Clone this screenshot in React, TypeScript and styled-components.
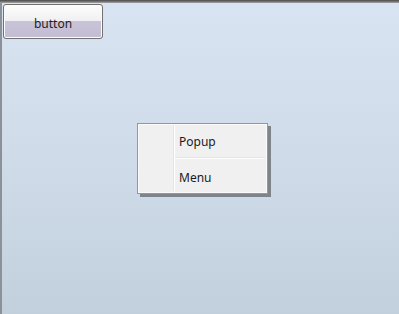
import styled, { createGlobalStyle } from "styled-components";

const GlobalStyle = createGlobalStyle`
  html, body {
    margin: 0;
    padding: 0;
  }
  body {
    font-family: "Noto Sans", "Open Sans", "DejaVu Sans", sans-serif;
  }
`;

const Window = styled.div`
  position: relative;
  width: 399px;
  height: 314px;
  box-sizing: border-box;
  border-top: 3px solid #6a6a6a;
  border-left: 2px solid #8c9198;
  background: linear-gradient(to bottom, #d8e4f1 0%, #cfdbe8 50%, #c2d0dd 100%);
  padding: 1px 0 0 1px;
`;

const TopEdge = styled.div`
  position: absolute;
  left: -2px;
  right: 0;
  top: -3px;
  height: 3px;
  background: linear-gradient(to bottom, #4a4a4a, #7a7a7a 60%, #a8a8a8);
`;

const Button = styled.button`
  width: 100px;
  height: 35px;
  padding: 3px 0 0;
  border: 1px solid #707070;
  border-radius: 3px;
  box-shadow: inset 0 0 0 1px #fcfcfc;
  background: linear-gradient(
    to bottom,
    #fdfdfd 0%,
    #f0f0f2 48%,
    #c8c3d7 50%,
    #c2bdd2 100%
  );
  font-family: inherit;
  font-size: 12px;
  color: #1e1e1e;
  cursor: pointer;
`;

const Menu = styled.div`
  position: absolute;
  left: 135px;
  top: 120px;
  width: 131px;
  box-sizing: border-box;
  border: 1px solid #979797;
  background: #f0f0f0;
  box-shadow: inset 0 0 0 1px #fafafa, 3px 3px 0 #7f838a;
  padding: 2px;
  display: flex;
`;

const Gutter = styled.div`
  width: 33px;
  border-right: 1px solid #e2e3e3;
  box-shadow: 1px 0 0 #ffffff;
  margin-right: 1px;
`;

const Items = styled.div`
  flex: 1;
  display: flex;
  flex-direction: column;
`;

const Item = styled.div<{ $last?: boolean }>`
  display: flex;
  height: 32px;
  box-sizing: border-box;
  align-items: center;
  padding: ${(p) => (p.$last ? "5px 0 0 4px" : "0 0 0 4px")};
  border-bottom: ${(p) => (p.$last ? "none" : "1px solid #e2e3e3")};
  box-shadow: ${(p) => (p.$last ? "none" : "0 1px 0 #ffffff")};
  margin-bottom: ${(p) => (p.$last ? "0" : "1px")};
`;

const Label = styled.span`
  font-size: 12px;
  color: #1a1a1a;
`;

export default function App() {
  return (
    <>
      <GlobalStyle />
      <Window>
        <TopEdge />
        <Button>button</Button>
        <Menu>
          <Gutter />
          <Items>
            <Item>
              <Label>Popup</Label>
            </Item>
            <Item $last>
              <Label>Menu</Label>
            </Item>
          </Items>
        </Menu>
      </Window>
    </>
  );
}
